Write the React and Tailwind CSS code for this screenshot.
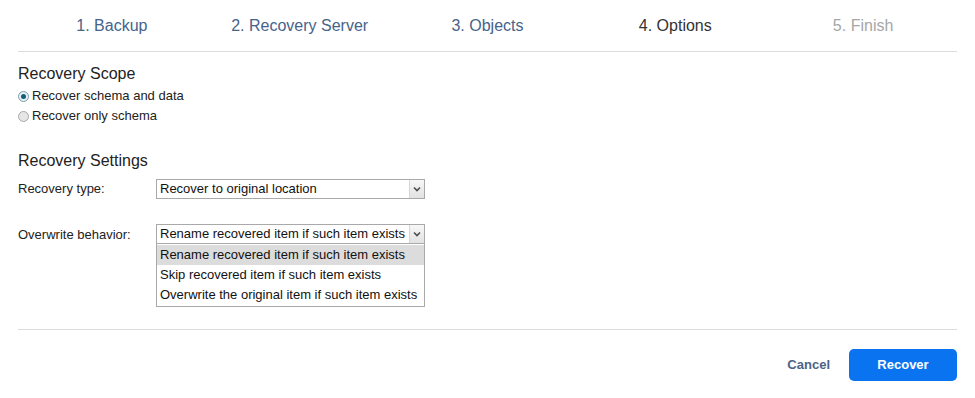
import React from 'react';

const steps = [
  { label: '1. Backup', cls: 'text-[#46638a]' },
  { label: '2. Recovery Server', cls: 'text-[#46638a]' },
  { label: '3. Objects', cls: 'text-[#46638a]' },
  { label: '4. Options', cls: 'text-[#333333]' },
  { label: '5. Finish', cls: 'text-[#a6a6a6]' },
];

function Radio({ checked, label }) {
  return (
    <label className="flex items-center h-5 gap-[3px]">
      <span
        className={`w-[11px] h-[11px] rounded-full border flex items-center justify-center ${
          checked ? 'border-[#7a9aa8] bg-[#e8f0f3]' : 'border-[#a8a8a8] bg-[#e6e6e6]'
        }`}
      >
        {checked && <span className="w-[5px] h-[5px] rounded-full bg-[#0f5f78]" />}
      </span>
      <span className="text-[13px] text-[#222]">{label}</span>
    </label>
  );
}

function Select({ value }) {
  return (
    <div className="w-[269px] h-[20px] border border-[#a9a9a9] bg-white flex items-stretch">
      <div className="flex-1 text-[13px] text-[#111] leading-[18px] pl-[3px] whitespace-nowrap overflow-hidden">{value}</div>
      <div className="w-[15px] border-l border-[#d6d6d6] bg-gradient-to-b from-[#f7f7f7] to-[#e2e2e2] flex items-center justify-center">
        <svg width="8" height="6" viewBox="0 0 8 6">
          <path d="M1 1.5 L4 4.5 L7 1.5" fill="none" stroke="#4d4d4d" strokeWidth="1.6" />
        </svg>
      </div>
    </div>
  );
}

export default function App() {
  const options = [
    'Rename recovered item if such item exists',
    'Skip recovered item if such item exists',
    'Overwrite the original item if such item exists',
  ];
  return (
    <div className="w-[975px] h-[398px] bg-white font-['Liberation_Sans',Arial,sans-serif] px-[18px]">
      <div className="grid grid-cols-5 h-[52px] items-center border-b border-[#dcdcdc]">
        {steps.map((s) => (
          <div key={s.label} className={`text-center text-[16px] ${s.cls}`}>{s.label}</div>
        ))}
      </div>

      <div className="text-[16px] text-[#222] mt-[13px] leading-[18px]">Recovery Scope</div>
      <div className="mt-[3px]">
        <Radio checked label="Recover schema and data" />
        <Radio label="Recover only schema" />
      </div>

      <div className="text-[16px] text-[#222] mt-[26px] leading-[18px]">Recovery Settings</div>
      <div className="flex items-center mt-[9px]">
        <div className="w-[138px] text-[13px] text-[#222]">Recovery type:</div>
        <Select value="Recover to original location" />
      </div>
      <div className="flex items-start mt-[25px]">
        <div className="w-[138px] text-[13px] text-[#222] pt-[1px]">Overwrite behavior:</div>
        <div>
          <Select value={options[0]} />
          <div className="w-[269px] border border-t-0 border-[#a9a9a9] bg-white py-[1px]">
            {options.map((o, i) => (
              <div
                key={o}
                className={`h-[20px] leading-[20px] text-[13px] text-[#111] pl-[3px] whitespace-nowrap ${
                  i === 0 ? 'bg-[#dcdcdc]' : ''
                }`}
              >
                {o}
              </div>
            ))}
          </div>
        </div>
      </div>

      <div className="border-t border-[#dcdcdc] mt-[22px]" />
      <div className="flex justify-end items-center mt-[19px] gap-[19px]">
        <button className="text-[13px] font-bold text-[#4a6485]">Cancel</button>
        <button className="w-[108px] h-[32px] rounded-[5px] bg-[#0a74f0] text-white text-[13px] font-bold">Recover</button>
      </div>
    </div>
  );
}
